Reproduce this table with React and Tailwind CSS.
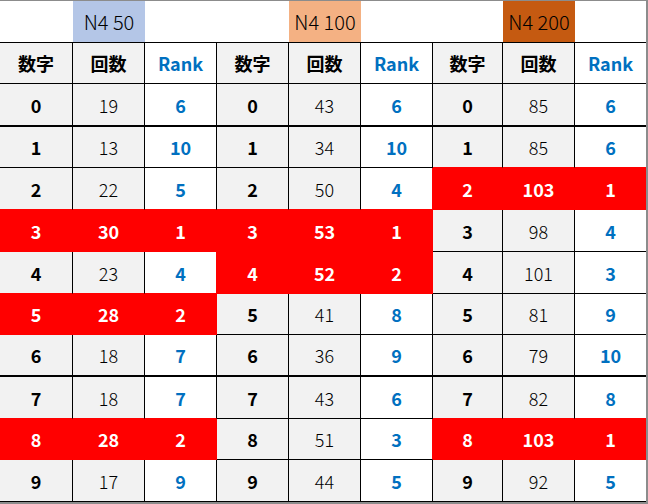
import React from "react";

const groups = [
  {
    label: "N4 50",
    bg: "bg-[#b4c6e7]",
    rows: [
      [19, 6, false], [13, 10, false], [22, 5, false], [30, 1, true], [23, 4, false],
      [28, 2, true], [18, 7, false], [18, 7, false], [28, 2, true], [17, 9, false],
    ],
  },
  {
    label: "N4 100",
    bg: "bg-[#f4b183]",
    rows: [
      [43, 6, false], [34, 10, false], [50, 4, false], [53, 1, true], [52, 2, true],
      [41, 8, false], [36, 9, false], [43, 6, false], [51, 3, false], [44, 5, false],
    ],
  },
  {
    label: "N4 200",
    bg: "bg-[#c55a11]",
    rows: [
      [85, 6, false], [85, 6, false], [103, 1, true], [98, 4, false], [101, 3, false],
      [81, 9, false], [79, 10, false], [82, 8, false], [103, 1, true], [92, 5, false],
    ],
  },
];

const colW = ["w-[73px]", "w-[72px]", "w-[72px]", "w-[72px]", "w-[72px]", "w-[72px]", "w-[70px]", "w-[72px]", "w-[71px]"];
const rowH = ["h-[43px]", "h-[41px]", "h-[42px]", "h-[42px]", "h-[42px]", "h-[41px]", "h-[42px]", "h-[42px]", "h-[41px]", "h-[42px]"];

function isRed(r, c) {
  if (r < 0 || r > 9 || c < 0 || c > 8) return false;
  const g = groups[Math.floor(c / 3)];
  return g.rows[r][2];
}

function Cell({ r, c, kind, children }) {
  const red = isRed(r, c);
  const last = c === 8;
  const rightRed = red || isRed(r, c + 1);
  const bottomRed = red || isRed(r + 1, c);
  const thick = r === 0 || r === 6;
  let bg = "bg-white";
  if (red) bg = "bg-[#ff0000]";
  else if (kind !== "rank") bg = "bg-[#f2f2f2]";
  let txt = "";
  if (red) txt = "text-white font-bold";
  else if (kind === "num") txt = "text-black font-bold";
  else if (kind === "cnt") txt = "text-black font-light";
  else txt = "text-[#0070c0] font-bold";
  return (
    <div
      className={[
        colW[c],
        "h-full flex items-center justify-center",
        last ? "" : "border-r",
        rightRed ? "border-r-[#ff0000]" : "border-r-black",
        thick ? "border-b-2" : "border-b",
        bottomRed ? "border-b-[#ff0000]" : "border-b-black",
        bg,
        txt,
      ].join(" ")}
    >
      {children}
    </div>
  );
}

export default function App() {
  return (
    <div
      className="w-[648px] h-[504px] bg-white border-t border-t-[#8c8c8c] border-r-2 border-r-[#8c8c8c] border-b-2 border-b-[#8c8c8c] flex flex-col text-[18px] leading-none"
      style={{ fontFamily: '"Noto Sans CJK JP", "Noto Sans", sans-serif' }}
    >
      <div className="h-[42px] flex border-b border-b-black shrink-0">
        {groups.map((g, gi) => (
          <React.Fragment key={gi}>
            <div className={gi === 2 ? "w-[70px]" : gi === 0 ? "w-[73px]" : "w-[72px]"} />
            <div className={`w-[72px] h-full flex items-center justify-center font-light text-black text-[20px] ${g.bg}`}>
              {g.label}
            </div>
            <div className={gi === 2 ? "w-[71px]" : "w-[72px]"} />
          </React.Fragment>
        ))}
      </div>
      <div className="h-[41px] flex shrink-0">
        {Array.from({ length: 9 }).map((_, c) => {
          const k = c % 3;
          const last = c === 8;
          return (
            <div
              key={c}
              className={[
                colW[c],
                "h-full flex items-center justify-center font-bold border-b border-b-black",
                last ? "" : "border-r border-r-black",
                k === 2 ? "bg-white text-[#0070c0]" : "bg-[#f2f2f2] text-black",
              ].join(" ")}
            >
              {k === 0 ? "数字" : k === 1 ? "回数" : "Rank"}
            </div>
          );
        })}
      </div>
      {Array.from({ length: 10 }).map((_, r) => (
        <div key={r} className={`${rowH[r]} flex shrink-0`}>
          {groups.map((g, gi) => (
            <React.Fragment key={gi}>
              <Cell r={r} c={gi * 3} kind="num">{r}</Cell>
              <Cell r={r} c={gi * 3 + 1} kind="cnt">{g.rows[r][0]}</Cell>
              <Cell r={r} c={gi * 3 + 2} kind="rank">{g.rows[r][1]}</Cell>
            </React.Fragment>
          ))}
        </div>
      ))}
    </div>
  );
}
